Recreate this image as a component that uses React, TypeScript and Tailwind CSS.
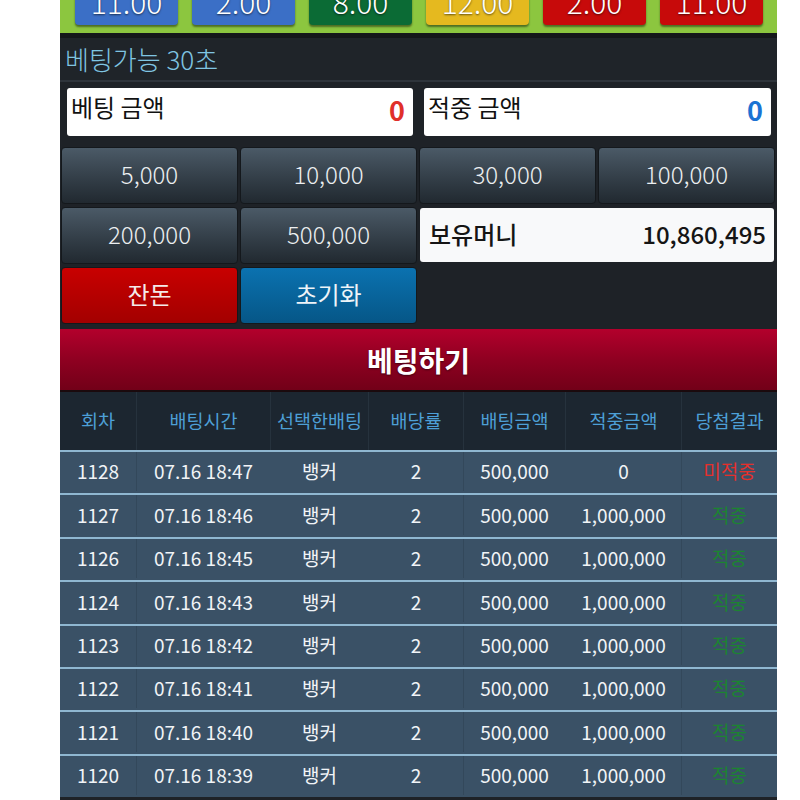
import React from "react";

const F = { fontFamily: '"Noto Sans CJK KR", "Noto Sans", sans-serif' };

const odds = [
  { v: "11.00", c: "bg-[#3b6fc6]" },
  { v: "2.00", c: "bg-[#3b6fc6]" },
  { v: "8.00", c: "bg-[#0b6b35]" },
  { v: "12.00", c: "bg-[#e5b91f]" },
  { v: "2.00", c: "bg-[#c70a0a]" },
  { v: "11.00", c: "bg-[#c70a0a]" },
];

const rows = [
  ["1128", "07.16 18:47", "0", false],
  ["1127", "07.16 18:46", "1,000,000", true],
  ["1126", "07.16 18:45", "1,000,000", true],
  ["1124", "07.16 18:43", "1,000,000", true],
  ["1123", "07.16 18:42", "1,000,000", true],
  ["1122", "07.16 18:41", "1,000,000", true],
  ["1121", "07.16 18:40", "1,000,000", true],
  ["1120", "07.16 18:39", "1,000,000", true],
] as const;

const headers = ["회차", "배팅시간", "선택한배팅", "배당률", "배팅금액", "적중금액", "당첨결과"];

function ChipBtn({ label }: { label: string }) {
  return (
    <div className="h-[57px] rounded-[4px] border border-[#14181c] bg-gradient-to-b from-[#4b5a67] to-[#212930] flex items-center justify-center pb-[3px] text-[24px] text-[#eceff1] font-light">
      {label}
    </div>
  );
}

export default function App() {
  return (
    <div className="w-[800px] h-[800px] bg-white overflow-hidden" style={F}>
      <div className="ml-[60px] w-[717px] h-[800px] bg-[#1e2227] flex flex-col">
        {/* odds strip */}
        <div className="h-[33px] bg-[#8cc63f] overflow-hidden relative shrink-0">
          <div className="absolute left-[15px] top-[-23px] flex gap-[14px]">
            {odds.map((o, i) => (
              <div
                key={i}
                className={`w-[103px] h-[48px] rounded-[4px] ${o.c} shadow-[0_2px_2px_rgba(0,0,0,0.45)] flex items-center justify-center text-white text-[30px] font-light leading-none [text-shadow:0_1px_2px_rgba(0,0,0,0.6)]`}
              >
                {o.v}
              </div>
            ))}
          </div>
        </div>
        <div className="h-[5px] bg-[#141719] shrink-0" />
        {/* timer bar */}
        <div className="h-[44px] bg-[#1f2429] flex items-center pl-[5px] shrink-0 border-b-2 border-[#2e343b]">
          <span className="text-[26px] font-light text-[#7fc5e2] leading-none">베팅가능 30초</span>
        </div>
        {/* inputs */}
        <div className="flex gap-[11px] pl-[7px] pr-[6px] pt-[6px] shrink-0">
          <div className="w-[346px] h-[48px] bg-white rounded-[3px] flex items-start justify-between pl-[4px] pr-[8px]">
            <span className="text-[24px] text-[#111] mt-[4px] leading-[30px]">베팅 금액</span>
            <span className="text-[27px] font-bold text-[#e0302a] mt-[7px] leading-[30px]">0</span>
          </div>
          <div className="w-[347px] h-[48px] bg-white rounded-[3px] flex items-start justify-between pl-[4px] pr-[8px]">
            <span className="text-[24px] text-[#111] mt-[4px] leading-[30px]">적중 금액</span>
            <span className="text-[27px] font-bold text-[#1b73d3] mt-[7px] leading-[30px]">0</span>
          </div>
        </div>
        {/* chip grid */}
        <div className="grid grid-cols-[177px_177px_177px_177px] gap-x-[2px] gap-y-[3px] pl-[1px] pt-[11px] shrink-0">
          <ChipBtn label="5,000" />
          <ChipBtn label="10,000" />
          <ChipBtn label="30,000" />
          <ChipBtn label="100,000" />
          <ChipBtn label="200,000" />
          <ChipBtn label="500,000" />
          <div className="col-span-2 pt-[1px] pl-[1px]">
            <div className="h-[54px] w-[354px] bg-[#f8f9fa] rounded-[3px] flex items-center justify-between pl-[9px] pr-[8px] pb-[2px]">
              <span className="text-[24px] font-medium text-[#151515]">보유머니</span>
              <span className="text-[24px] font-medium text-[#151515]">10,860,495</span>
            </div>
          </div>
          <div className="h-[57px] rounded-[4px] border border-[#14181c] bg-gradient-to-b from-[#c80000] to-[#a30000] flex items-center justify-center pb-[3px] text-[24px] text-[#f4eaea]">
            잔돈
          </div>
          <div className="h-[57px] rounded-[4px] border border-[#14181c] bg-gradient-to-b from-[#0b72b0] to-[#065687] flex items-center justify-center pb-[3px] text-[24px] text-[#eef4f8]">
            초기화
          </div>
        </div>
        {/* bet button */}
        <div className="mt-[5px] h-[63px] bg-gradient-to-b from-[#b3002c] via-[#8f0021] to-[#720018] border-b-2 border-[#1a0a0d] flex items-center justify-center shrink-0">
          <span className="text-[28px] font-bold text-white [text-shadow:0_1px_2px_rgba(0,0,0,0.5)]">베팅하기</span>
        </div>
        {/* table */}
        <div className="grid grid-cols-[76px_134px_98px_95px_102px_116px_96px] h-[58px] bg-[#1c2630] shrink-0">
          {headers.map((h, i) => (
            <div
              key={h}
              className={`flex items-center justify-center text-[18.5px] text-[#4d9fd6] ${i > 0 ? "border-l border-[#26323d]" : ""}`}
            >
              {h}
            </div>
          ))}
        </div>
        {rows.map((r, ri) => (
          <div
            key={ri}
            className="grid grid-cols-[76px_134px_98px_95px_102px_116px_96px] h-[43.4px] pb-[2px] bg-[#3a5166] border-t-2 border-[#8fb7d1] shrink-0 text-[19px] text-[#f1f4f7]"
          >
            <div className="flex items-center justify-center">{r[0]}</div>
            <div className="flex items-center justify-center border-l border-[#33485b]">{r[1]}</div>
            <div className="flex items-center justify-center border-l border-[#3a5166]">뱅커</div>
            <div className="flex items-center justify-center border-l border-[#3a5166]">2</div>
            <div className="flex items-center justify-center border-l border-[#33485b]">500,000</div>
            <div className="flex items-center justify-center border-l border-[#3a5166]">{r[2]}</div>
            <div
              className={`flex items-center justify-center border-l border-[#33485b] ${r[3] ? "text-[#1c8431]" : "text-[#e3302c]"}`}
            >
              {r[3] ? "적중" : "미적중"}
            </div>
          </div>
        ))}
      </div>
    </div>
  );
}
